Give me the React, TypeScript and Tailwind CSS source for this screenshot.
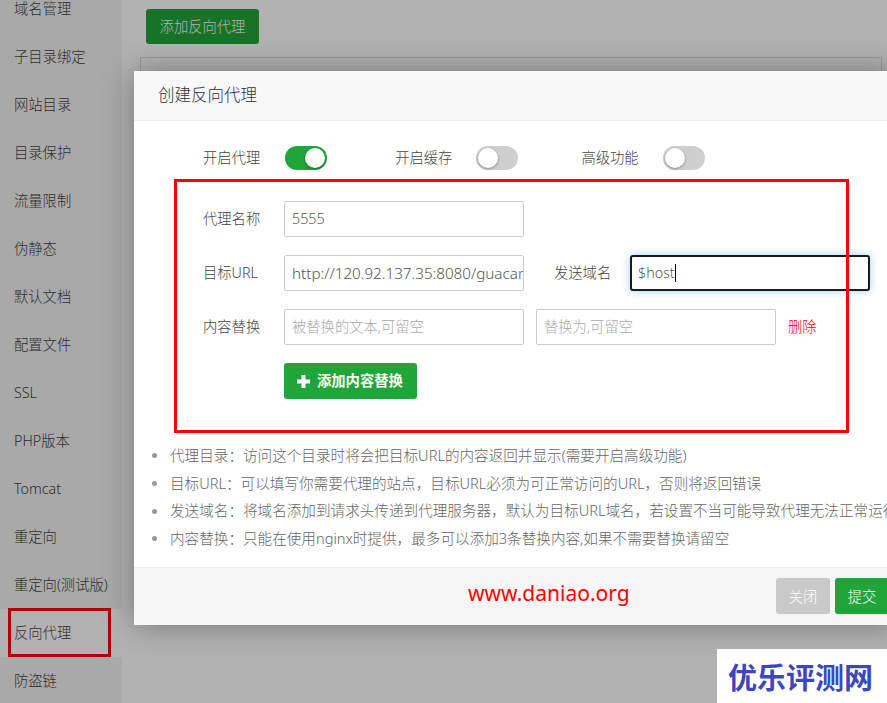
import React from "react";

const FONT = { fontFamily: '"Noto Sans", "Noto Sans CJK SC", sans-serif' };

const sideItems = [
  "域名管理",
  "子目录绑定",
  "网站目录",
  "目录保护",
  "流量限制",
  "伪静态",
  "默认文档",
  "配置文件",
  "SSL",
  "PHP版本",
  "Tomcat",
  "重定向",
  "重定向(测试版)",
  "反向代理",
  "防盗链",
];

function Toggle({ on }: { on: boolean }) {
  return (
    <div
      className={
        on
          ? "w-[42px] h-[24px] shrink-0 rounded-full bg-[#20a53a] flex items-center justify-end px-[2px]"
          : "w-[42px] h-[24px] shrink-0 rounded-full bg-[#cfcfcf] flex items-center justify-start px-[2px]"
      }
    >
      <div className="w-[20px] h-[20px] rounded-full bg-white shadow-[0_1px_3px_rgba(0,0,0,0.35)]" />
    </div>
  );
}

function Field({ value, placeholder, big }: { value?: string; placeholder?: string; big?: boolean }) {
  return (
    <div className="w-[240px] h-[36px] shrink-0 border border-[#ccc] rounded-[2px] px-[7px] flex items-center overflow-hidden bg-white">
      {value ? (
        <span className={big ? "whitespace-nowrap text-[#555] text-[15.2px]" : "whitespace-nowrap text-[#555]"}>
          {value}
        </span>
      ) : (
        <span className="whitespace-nowrap text-[#aaa]">{placeholder}</span>
      )}
    </div>
  );
}

const notes = [
  "代理目录：访问这个目录时将会把目标URL的内容返回并显示(需要开启高级功能)",
  "目标URL：可以填写你需要代理的站点，目标URL必须为可正常访问的URL，否则将返回错误",
  "发送域名：将域名添加到请求头传递到代理服务器，默认为目标URL域名，若设置不当可能导致代理无法正常运行",
  "内容替换：只能在使用nginx时提供，最多可以添加3条替换内容,如果不需要替换请留空",
];

export default function App() {
  return (
    <div className="relative w-[887px] h-[703px] overflow-hidden bg-white text-[14.3px] font-light" style={FONT}>
      {/* page */}
      <div className="flex h-full">
        <div className="w-[122px] h-full bg-[#f2f2f2] shrink-0">
          <div className="mt-[-15px] flex flex-col">
            {sideItems.map((t) => (
              <div
                key={t}
                className={
                  t === "反向代理"
                    ? "relative h-[48px] flex items-center pl-[14px] text-[#444] bg-white"
                    : "h-[48px] flex items-center pl-[14px] text-[#444]"
                }
              >
                {t}
                {t === "反向代理" && (
                  <div className="absolute left-[8px] top-[-1px] w-[103px] h-[49px] border-[3px] border-[#f00]" />
                )}
              </div>
            ))}
          </div>
        </div>
        <div className="flex-1 pl-[24px] pt-[9px]">
          <div className="w-[113px] h-[35px] rounded-[3px] bg-[#20a53a] text-white flex items-center justify-center">
            添加反向代理
          </div>
          <div className="mt-[13px] ml-[-6px] w-[742px] h-[400px] border border-[#ddd]" />
        </div>
      </div>

      {/* overlay */}
      <div className="absolute inset-0 bg-black/30" />

      {/* modal */}
      <div className="absolute left-[134px] top-[71px] w-[765px] bg-white shadow-[0_0_30px_rgba(0,0,0,0.35)] overflow-hidden">
        <div className="h-[50px] bg-[#f8f8f8] border-b border-[#eee] flex items-center pl-[24px] text-[16.5px] text-[#333]">
          创建反向代理
        </div>
        <div className="pt-[25px]">
          <div className="flex items-center h-[24px] pl-[69px] text-[#444]">
            <span className="shrink-0">开启代理</span>
            <div className="ml-[25px]">
              <Toggle on />
            </div>
            <span className="ml-[68px] shrink-0">开启缓存</span>
            <div className="ml-[24px]">
              <Toggle on={false} />
            </div>
            <span className="ml-[63px] shrink-0">高级功能</span>
            <div className="ml-[24px]">
              <Toggle on={false} />
            </div>
          </div>

          <div className="relative ml-[40px] mt-[9px] w-[675px] h-[254px] pt-[22px] pl-[29px] flex flex-col gap-[18px]">
            <div className="flex items-center h-[36px]">
              <span className="w-[57px] shrink-0 text-[#444] whitespace-nowrap">代理名称</span>
              <div className="ml-[24px] shrink-0">
                <Field value="5555" />
              </div>
            </div>
            <div className="flex items-center h-[36px]">
              <span className="w-[57px] shrink-0 text-[#444] whitespace-nowrap">目标URL</span>
              <div className="ml-[24px] shrink-0">
                <Field value="http://120.92.137.35:8080/guacamole" big />
              </div>
              <span className="ml-[30px] w-[57px] shrink-0 text-[#444] whitespace-nowrap">发送域名</span>
              <div className="ml-[19px] w-[240px] h-[36px] shrink-0 border-2 border-[#1a1a1a] rounded-[3px] px-[6px] flex items-center bg-white shadow-[0_0_8px_rgba(102,175,233,0.6)]">
                <span className="text-[#555]">$host</span>
                <span className="w-px h-[18px] bg-black" />
              </div>
            </div>
            <div className="flex items-center h-[36px]">
              <span className="w-[57px] shrink-0 text-[#444] whitespace-nowrap">内容替换</span>
              <div className="ml-[24px] shrink-0">
                <Field placeholder="被替换的文本,可留空" />
              </div>
              <div className="ml-[12px] shrink-0">
                <Field placeholder="替换为,可留空" />
              </div>
              <span className="ml-[12px] shrink-0 text-[#f00]">删除</span>
            </div>
            <div className="flex items-center h-[36px]">
              <div className="ml-[81px] w-[133px] h-[36px] shrink-0 rounded-[3px] bg-[#20a53a] text-white font-semibold flex items-center pl-[13px] gap-[7px]">
                <svg width="13" height="13" viewBox="0 0 13 13">
                  <rect x="4.5" y="0" width="4" height="13" fill="white" />
                  <rect x="0" y="4.5" width="13" height="4" fill="white" />
                </svg>
                <span>添加内容替换</span>
              </div>
            </div>
            <div className="absolute inset-0 border-[3px] border-[#f00] pointer-events-none" />
          </div>

          <ul className="mt-[9px] mb-[14px] pl-[18px] flex flex-col text-[14.6px]">
            {notes.map((n) => (
              <li key={n} className="h-[27.7px] flex items-center text-[#666] whitespace-nowrap">
                <span className="w-[5px] h-[5px] rounded-full bg-[#999] shrink-0" />
                <span className="ml-[13px]">{n}</span>
              </li>
            ))}
          </ul>
        </div>
        <div className="h-[58px] border-t border-[#eee] bg-[#f6f6f6] flex items-center pr-[10px]">
          <span className="ml-[334px] text-[21px] font-normal text-[#f00] mb-[6px]">www.daniao.org</span>
          <div className="ml-auto flex gap-[5px]">
            <div className="w-[54px] h-[36px] rounded-[3px] bg-[#c9c9c9] text-white flex items-center justify-center">
              关闭
            </div>
            <div className="w-[54px] h-[36px] rounded-[3px] bg-[#20a53a] text-white flex items-center justify-center">
              提交
            </div>
          </div>
        </div>
      </div>

      {/* watermark */}
      <div className="absolute right-0 bottom-0 w-[170px] h-[54px] bg-white flex items-center pl-[11px]">
        <span
          className="text-[29px] font-bold text-[#3d46c2] leading-none"
          style={{ fontFamily: '"Noto Sans CJK SC", sans-serif' }}
        >
          优乐评测网
        </span>
      </div>
    </div>
  );
}
